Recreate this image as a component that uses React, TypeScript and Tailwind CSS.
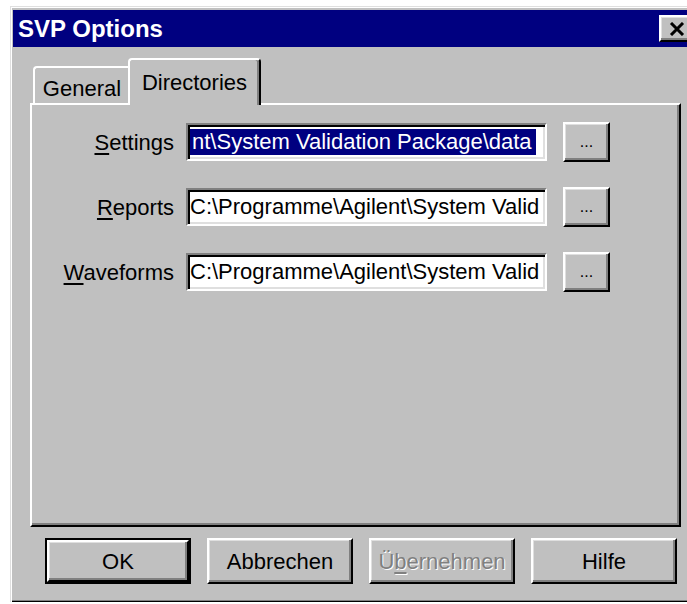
import React from "react";

const raised =
    "border-2 border-t-white border-l-white border-r-black border-b-black shadow-[inset_-2px_-2px_0_#808080,inset_1px_1px_0_#dfdfdf]";
const sunken =
    "border-2 border-t-[#808080] border-l-[#808080] border-r-white border-b-white shadow-[inset_2px_2px_0_#000,inset_-2px_-2px_0_#dfdfdf]";

const Mnemonic = ({ text, at = 0 }: { text: string; at?: number }) => (
    <>
        {text.slice(0, at)}
        <span className="underline decoration-[1.5px] underline-offset-[3px]">{text[at]}</span>
        {text.slice(at + 1)}
    </>
);

const PathRow = ({
    label,
    at,
    value,
    selected,
}: {
    label: string;
    at?: number;
    value: string;
    selected?: boolean;
}) => (
    <div className="flex items-center h-[40px]">
        <div className="w-[120px] text-right pr-[1px] whitespace-nowrap">
            <Mnemonic text={label} at={at} />
        </div>
        <div className={`ml-[11px] w-[361px] h-[38px] bg-white overflow-hidden flex items-center pl-[2px] ${sunken}`}>
            {selected ? (
                <span className="whitespace-nowrap bg-[#000080] text-white leading-[26px] pl-[2px] pr-[4px]">{value}</span>
            ) : (
                <span className="whitespace-nowrap leading-[26px]">{value}</span>
            )}
        </div>
        <button className={`ml-[16px] w-[47px] h-[40px] bg-[#c0c0c0] flex items-end justify-center text-[16px] leading-none pb-[10px] ${raised}`}>
            ...
        </button>
    </div>
);

const DialogButton = ({
    children,
    isDefault,
    disabled,
}: {
    children: React.ReactNode;
    isDefault?: boolean;
    disabled?: boolean;
}) => (
    <div className={`w-[146px] h-[46px] ${isDefault ? "border-2 border-black" : ""}`}>
        <button
            className={`w-full h-full bg-[#c0c0c0] flex items-center justify-center ${raised} ${
                disabled ? "text-[#808080] [text-shadow:1px_1px_0_#fff]" : "text-black"
            }`}
        >
            {children}
        </button>
    </div>
);

export default function App() {
    return (
        <div
            className="w-[687px] h-[604px] overflow-hidden bg-white pt-[6px] pl-[10px] text-[22px] text-black"
            style={{ fontFamily: '"Liberation Sans", Arial, sans-serif' }}
        >
            <div className="w-[690px] h-[596px] bg-[#c0c0c0] p-[3px] flex flex-col shadow-[inset_1px_1px_0_#dfdfdf,inset_2px_2px_0_#fff,inset_-1px_-1px_0_#000,inset_-2px_-2px_0_#808080]">
                {/* title bar */}
                <div className="h-[37px] bg-[#000080] flex items-center pl-[5px] pr-[2px] mt-[1px]">
                    <div className="flex-1 text-white font-bold text-[24px] leading-none">SVP Options</div>
                    <div className={`w-[36px] h-[27px] bg-[#c0c0c0] flex items-center justify-center ${raised}`}>
                        <svg width="16" height="14" viewBox="0 0 16 14">
                            <path d="M2 1 L14 13 M14 1 L2 13" stroke="#000" strokeWidth="3" />
                        </svg>
                    </div>
                </div>

                {/* tabs */}
                <div className="mt-[13px] ml-[17px] flex flex-col w-[651px]">
                    <div className="flex items-end h-[45px] pl-[3px] relative z-10 -mb-[2px]">
                        <div className="h-[39px] w-[96px] border-t-2 border-l-2 border-white rounded-tl-[4px] flex items-center justify-center pt-[4px]">
                            General
                        </div>
                        <div className="h-[47px] w-[133px] -ml-[1px] bg-[#c0c0c0] border-t-2 border-l-2 border-white border-r-2 border-r-black rounded-t-[4px] shadow-[inset_-2px_0_0_#808080] flex items-start justify-center pt-[6px]">
                            Directories
                        </div>
                    </div>
                    <div className="h-[424px] border-2 border-t-white border-l-white border-r-black border-b-black shadow-[inset_-2px_-2px_0_#808080] pt-[17px] pl-[23px] flex flex-col gap-[25px]">
                        <PathRow label="Settings" value="nt\System Validation Package\data" selected />
                        <PathRow label="Reports" value="C:\Programme\Agilent\System Valid" />
                        <PathRow label="Waveforms" value="C:\Programme\Agilent\System Valid" />
                    </div>
                </div>

                {/* dialog buttons */}
                <div className="mt-[11px] ml-[32px] flex gap-[16px]">
                    <DialogButton isDefault>OK</DialogButton>
                    <DialogButton>Abbrechen</DialogButton>
                    <DialogButton disabled>
                        <Mnemonic text="Übernehmen" at={1} />
                    </DialogButton>
                    <DialogButton>Hilfe</DialogButton>
                </div>
            </div>
        </div>
    );
}
